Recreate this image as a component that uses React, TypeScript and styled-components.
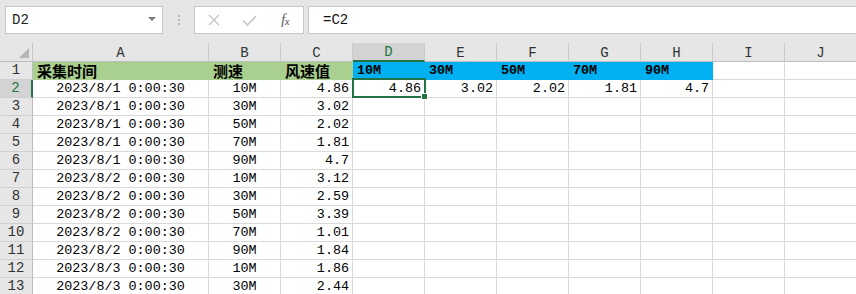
import React from "react";
import styled, { createGlobalStyle } from "styled-components";

const Global = createGlobalStyle`
  html, body { margin: 0; padding: 0; background: #ffffff; overflow: hidden; }
  body { font-family: "Liberation Mono", monospace; }
`;

const COLS = "33px 176px repeat(9, 72px)";
const MONO = `"Liberation Mono", "DejaVu Sans Mono", monospace`;
const CJK = `"Noto Sans CJK SC", "Noto Sans", sans-serif`;

const Page = styled.div`
  width: 856px;
  height: 294px;
  overflow: hidden;
  background: #e6e6e6;
`;

const Toolbar = styled.div`
  box-sizing: border-box;
  height: 43px;
  display: flex;
  align-items: flex-start;
  padding: 6px 0 0 5px;
  background: #e6e6e6;
`;

const NameBox = styled.div`
  box-sizing: border-box;
  width: 158px;
  height: 28px;
  border: 1px solid #c6c6c6;
  background: #fff;
  display: flex;
  align-items: center;
  justify-content: space-between;
  padding: 0 6px 0 6px;
  font-family: ${MONO};
  font-size: 14px;
  color: #222;
`;

const Caret = styled.span`
  width: 0;
  height: 0;
  border-left: 4px solid transparent;
  border-right: 4px solid transparent;
  border-top: 4px solid #7a7a7a;
  margin-bottom: 2px;
`;

const Dots = styled.div`
  width: 31px;
  height: 28px;
  display: flex;
  flex-direction: column;
  align-items: center;
  justify-content: center;
  gap: 2px;
  span {
    width: 2px;
    height: 2px;
    background: #b8b8b8;
  }
`;

const BtnGroup = styled.div`
  box-sizing: border-box;
  width: 110px;
  height: 28px;
  border: 1px solid #c6c6c6;
  background: #fff;
  display: flex;
  align-items: center;
  padding-left: 1px;
`;

const IconSlot = styled.div`
  width: 36px;
  height: 26px;
  display: flex;
  align-items: center;
  justify-content: center;
`;

const Fx = styled.span`
  font-family: "Liberation Serif", serif;
  font-style: italic;
  font-size: 14px;
  color: #555;
  letter-spacing: -0.5px;
  sub {
    font-size: 11px;
    vertical-align: -1px;
  }
`;

const FormulaBox = styled.div`
  box-sizing: border-box;
  flex: 1;
  margin-left: 4px;
  height: 28px;
  border: 1px solid #c6c6c6;
  border-right: none;
  background: #fff;
  display: flex;
  align-items: center;
  padding-left: 14px;
  font-family: ${MONO};
  font-size: 14px;
  color: #111;
`;

const Grid = styled.div`
  background: #fff;
`;

const Row = styled.div<{ $h: number }>`
  display: grid;
  grid-template-columns: ${COLS};
  height: ${(p) => p.$h}px;
`;

const Corner = styled.div`
  position: relative;
  box-sizing: border-box;
  background: #e6e6e6;
  border-right: 1px solid #c6c6c6;
  border-bottom: 1px solid #bdbdbd;
  &::after {
    content: "";
    position: absolute;
    right: 3px;
    bottom: 3px;
    width: 0;
    height: 0;
    border-left: 10px solid transparent;
    border-bottom: 10px solid #b5b5b5;
  }
`;

const ColHead = styled.div<{ $active?: boolean }>`
  box-sizing: border-box;
  background: ${(p) => (p.$active ? "#d3d3d3" : "#e6e6e6")};
  border-right: 1px solid #c9c9c9;
  border-bottom: ${(p) => (p.$active ? "2px solid #217346" : "1px solid #bdbdbd")};
  display: flex;
  align-items: center;
  justify-content: center;
  font-family: ${MONO};
  font-size: 14px;
  line-height: 15px;
  color: ${(p) => (p.$active ? "#217346" : "#333")};
  padding-top: 2px;
`;

const RowHead = styled.div<{ $active?: boolean }>`
  box-sizing: border-box;
  background: ${(p) => (p.$active ? "#d3d3d3" : "#e6e6e6")};
  border-right: ${(p) => (p.$active ? "2px solid #217346" : "1px solid #bdbdbd")};
  border-bottom: 1px solid #cfcfcf;
  display: flex;
  align-items: center;
  justify-content: center;
  font-family: ${MONO};
  font-size: 14px;
  line-height: 15px;
  color: ${(p) => (p.$active ? "#217346" : "#333")};
`;

const Cell = styled.div<{
  $bg?: string;
  $align?: "left" | "center" | "right";
  $bold?: boolean;
  $cjk?: boolean;
  $sel?: boolean;
}>`
  position: ${(p) => (p.$sel ? "relative" : "static")};
  box-sizing: border-box;
  background: ${(p) => p.$bg || "#fff"};
  border-right: 1px solid ${(p) => p.$bg || "#d9d9d9"};
  border-bottom: 1px solid ${(p) => p.$bg || "#d9d9d9"};
  display: flex;
  align-items: center;
  justify-content: ${(p) =>
    p.$align === "center" ? "center" : p.$align === "right" ? "flex-end" : "flex-start"};
  padding: ${(p) => (p.$align === "right" ? "0 3px 0 0" : p.$align === "center" ? "0" : "0 0 0 4px")};
  font-family: ${(p) => (p.$cjk ? CJK : MONO)};
  font-size: ${(p) => (p.$cjk ? "15px" : "13.4px")};
  font-weight: ${(p) => (p.$bold ? 700 : 400)};
  color: #000;
  white-space: nowrap;
  overflow: visible;
  line-height: 15px;
`;

const Selection = styled.div`
  position: absolute;
  top: -2px;
  left: -1px;
  right: -2px;
  bottom: -1px;
  border: 2px solid #217346;
  z-index: 2;
  pointer-events: none;
  &::after {
    content: "";
    position: absolute;
    right: -4px;
    bottom: -4px;
    width: 5px;
    height: 5px;
    background: #217346;
    border: 1px solid #fff;
  }
`;

const GREEN = "#a9d08e";
const BLUE = "#00b0f0";

const letters = ["A", "B", "C", "D", "E", "F", "G", "H", "I", "J"];

const data: [string, string, string][] = [
  ["2023/8/1 0:00:30", "10M", "4.86"],
  ["2023/8/1 0:00:30", "30M", "3.02"],
  ["2023/8/1 0:00:30", "50M", "2.02"],
  ["2023/8/1 0:00:30", "70M", "1.81"],
  ["2023/8/1 0:00:30", "90M", "4.7"],
  ["2023/8/2 0:00:30", "10M", "3.12"],
  ["2023/8/2 0:00:30", "30M", "2.59"],
  ["2023/8/2 0:00:30", "50M", "3.39"],
  ["2023/8/2 0:00:30", "70M", "1.01"],
  ["2023/8/2 0:00:30", "90M", "1.84"],
  ["2023/8/3 0:00:30", "10M", "1.86"],
  ["2023/8/3 0:00:30", "30M", "2.44"],
];

const row2Extra = ["3.02", "2.02", "1.81", "4.7"];
const heights = ["10M", "30M", "50M", "70M", "90M"];

export default function App() {
  return (
    <Page>
      <Global />
      <Toolbar>
        <NameBox>
          <span>D2</span>
          <Caret />
        </NameBox>
        <Dots>
          <span />
          <span />
          <span />
        </Dots>
        <BtnGroup>
          <IconSlot>
            <svg width="12" height="12" viewBox="0 0 12 12">
              <path d="M1 1 L11 11 M11 1 L1 11" stroke="#c4c4c4" strokeWidth="1.4" fill="none" />
            </svg>
          </IconSlot>
          <IconSlot>
            <svg width="15" height="11" viewBox="0 0 15 11">
              <path d="M1 5.5 L5.5 10 L14 1" stroke="#c4c4c4" strokeWidth="1.6" fill="none" />
            </svg>
          </IconSlot>
          <IconSlot>
            <Fx>
              f<sub>x</sub>
            </Fx>
          </IconSlot>
        </BtnGroup>
        <FormulaBox>=C2</FormulaBox>
      </Toolbar>
      <Grid>
        <Row $h={19}>
          <Corner />
          {letters.map((l) => (
            <ColHead key={l} $active={l === "D"}>
              {l}
            </ColHead>
          ))}
        </Row>
        <Row $h={18}>
          <RowHead>1</RowHead>
          <Cell $bg={GREEN} $cjk $bold>采集时间</Cell>
          <Cell $bg={GREEN} $cjk $bold>测速</Cell>
          <Cell $bg={GREEN} $cjk $bold>风速值</Cell>
          {heights.map((h) => (
            <Cell key={h} $bg={BLUE} $bold>
              {h}
            </Cell>
          ))}
          <Cell />
          <Cell />
        </Row>
        {data.map((d, i) => {
          const n = i + 2;
          const first = n === 2;
          return (
            <Row key={n} $h={18}>
              <RowHead $active={first}>{n}</RowHead>
              <Cell $align="center">{d[0]}</Cell>
              <Cell $align="center">{d[1]}</Cell>
              <Cell $align="right">{d[2]}</Cell>
              <Cell $align="right" $sel={first}>
                {first ? "4.86" : ""}
                {first && <Selection />}
              </Cell>
              {[0, 1, 2, 3].map((k) => (
                <Cell key={k} $align="right">
                  {first ? row2Extra[k] : ""}
                </Cell>
              ))}
              <Cell />
              <Cell />
            </Row>
          );
        })}
      </Grid>
    </Page>
  );
}
